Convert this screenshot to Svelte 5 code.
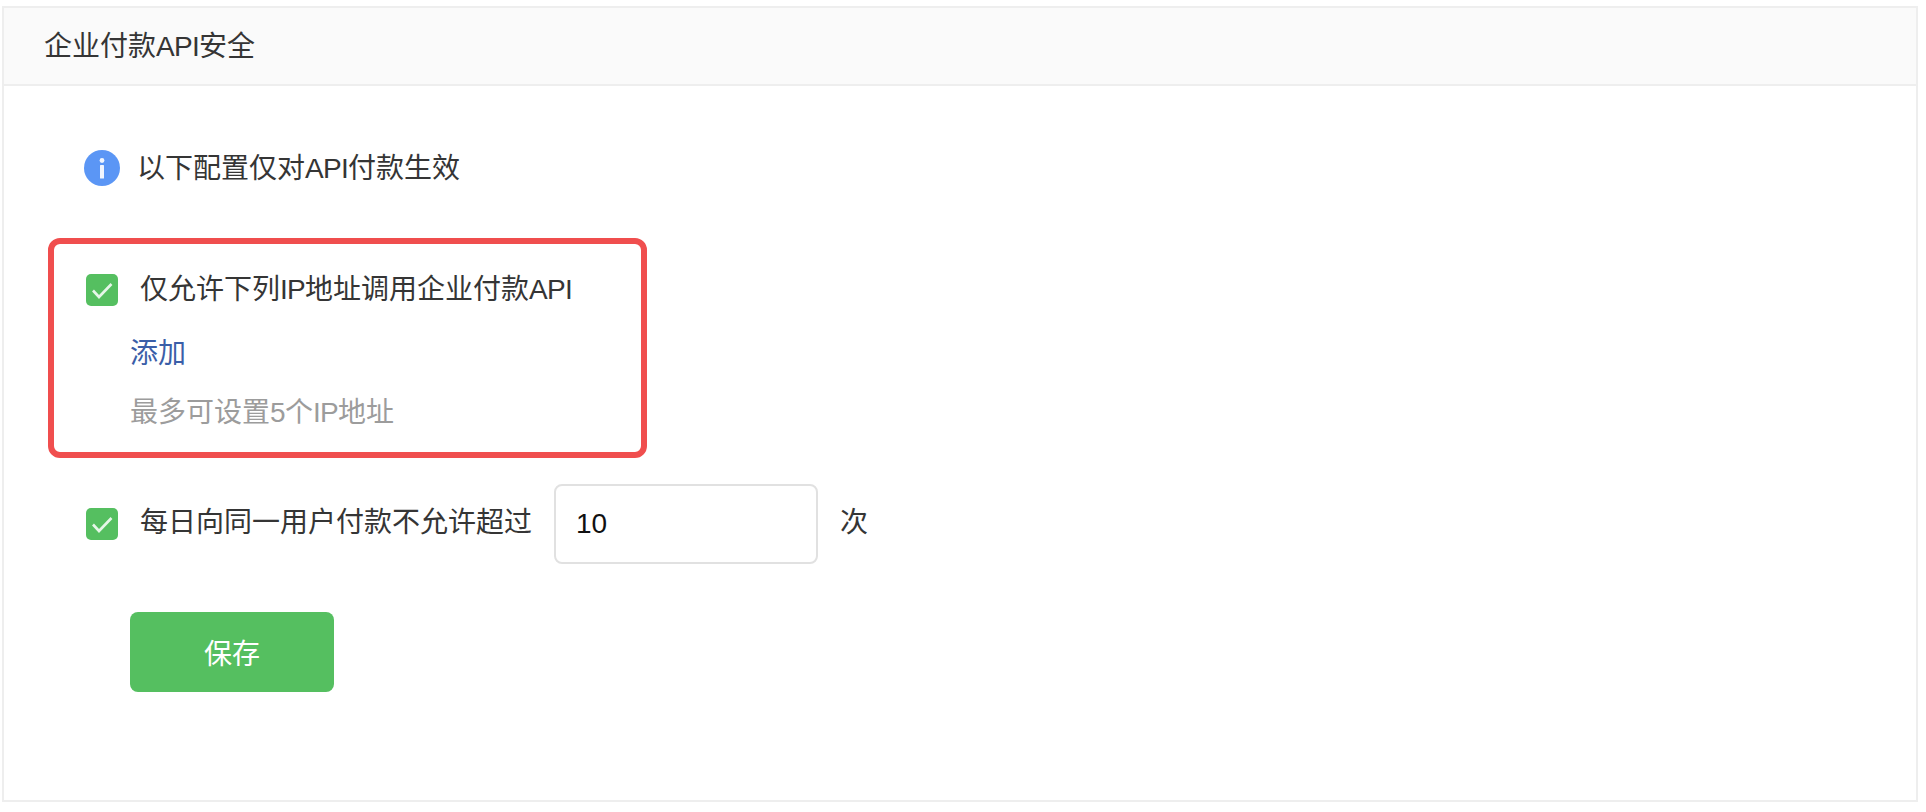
<script>
  let checkedIp = $state(true);
  let checkedLimit = $state(true);
  let limit = $state('10');
</script>

<div class="panel">
  <div class="panel-head">企业付款<span class="en">API</span>安全</div>
  <div class="panel-body">
    <div class="tip">
      <svg class="tip-icon" width="36" height="36" viewBox="0 0 36 36">
        <circle cx="18" cy="18" r="18" fill="#5b96f5" />
        <circle cx="18" cy="10.5" r="2.4" fill="#f2f6fe" />
        <rect x="16" y="15" width="4" height="13.5" rx="0.6" fill="#f2f6fe" />
      </svg>
      <span class="tip-text">以下配置仅对<span class="en">API</span>付款生效</span>
    </div>

    <div class="ip-box">
      <label class="check-row">
        <input type="checkbox" bind:checked={checkedIp} />
        <span class="check">
          <svg width="32" height="32" viewBox="0 0 32 32" fill="none" stroke="#e6f6e8" stroke-width="2.6"><polyline points="7,16.5 13,23 25.5,10" /></svg>
        </span>
        <span class="ip-label">仅允许下列<span class="en">IP</span>地址调用企业付款<span class="en">API</span></span>
      </label>
      <a class="add" href="#add">添加</a>
      <p class="hint">最多可设置<span class="en">5</span>个<span class="en">IP</span>地址</p>
    </div>

    <div class="limit-row">
      <label class="check-row">
        <input type="checkbox" bind:checked={checkedLimit} />
        <span class="check">
          <svg width="32" height="32" viewBox="0 0 32 32" fill="none" stroke="#e6f6e8" stroke-width="2.6"><polyline points="7,16.5 13,23 25.5,10" /></svg>
        </span>
        <span class="label">每日向同一用户付款不允许超过</span>
      </label>
      <input class="limit-input" type="text" bind:value={limit} />
      <span class="label">次</span>
    </div>

    <button class="save">保存</button>
  </div>
</div>

<style>
  :global(body) { margin: 0; background: #fff; }
  .panel { box-sizing: border-box; width: 1916px; height: 796px; margin: 6px 0 0 2px; border: 2px solid #eee; font-family: "Liberation Sans", "Noto Sans CJK SC", sans-serif; font-size: 28px; color: #353535; }
  .panel-head { box-sizing: border-box; height: 78px; padding-left: 40px; line-height: 78px; background: #fafafa; border-bottom: 2px solid #eee; }
  .panel-body { padding: 64px 0 0 44px; }
  .en { letter-spacing: -0.7px; }
  .label { padding-bottom: 2px; line-height: 32px; }
  .ip-label { line-height: 32px; }

  .tip { display: flex; align-items: center; gap: 17px; height: 36px; margin-left: 36px; }
  .tip-icon { flex-shrink: 0; }
  .tip-text { padding-top: 2px; line-height: 32px; }

  .ip-box { box-sizing: border-box; width: 599px; height: 220px; margin: 52px 0 0 0; padding: 30px 0 0 32px; border: 6px solid #f04e4e; border-radius: 12px; }
  .check-row { display: flex; align-items: center; gap: 22px; height: 32px; }
  .check-row input { display: none; }
  .check { display: flex; align-items: center; justify-content: center; flex-shrink: 0; width: 32px; height: 32px; border-radius: 5px; background: #55bf60; }
  .add { display: block; margin: 28px 0 0 44px; line-height: 40px; color: #3a5ea8; text-decoration: none; }
  .hint { margin: 19px 0 0 44px; line-height: 40px; color: #9c9c9c; }

  .limit-row { display: flex; align-items: center; margin: 26px 0 0 38px; height: 80px; }
  .limit-input { box-sizing: border-box; width: 264px; height: 80px; margin: 0 22px 0 22px; padding: 0 20px; border: 2px solid #e1e1e1; border-radius: 8px; font: inherit; color: #111; outline: none; }

  .save { display: block; width: 204px; height: 80px; margin: 48px 0 0 82px; border: none; border-radius: 8px; background: #55bf60; color: #fff; font: inherit; }
</style>
